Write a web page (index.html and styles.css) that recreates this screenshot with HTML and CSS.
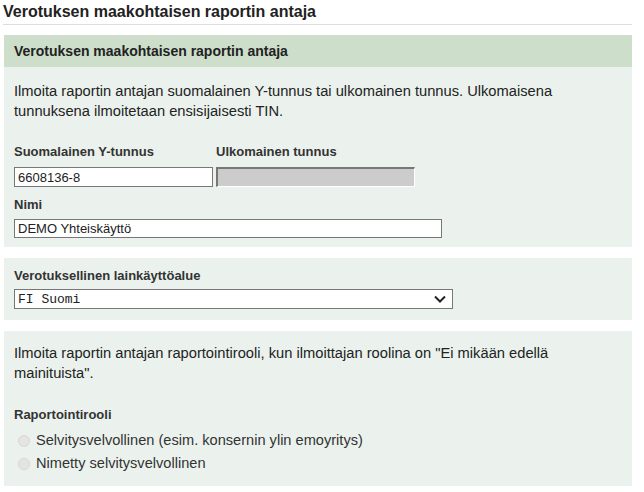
FILE: index.html
```html
<!DOCTYPE html>
<html lang="fi">
<head>
    <meta charset="UTF-8">
    <meta name="viewport" content="width=device-width, initial-scale=1.0">
    <title>Verotuksen maakohtaisen raportin antaja</title>
    <link rel="stylesheet" href="styles.css">
</head>
<body>
    <div class="page">
        <h1 class="page-title">Verotuksen maakohtaisen raportin antaja</h1>

        <section class="panel">
            <h2 class="panel-head">Verotuksen maakohtaisen raportin antaja</h2>
            <div class="panel-body first">
                <p class="info">Ilmoita raportin antajan suomalainen Y-tunnus tai ulkomainen tunnus. Ulkomaisena tunnuksena ilmoitetaan ensisijaisesti TIN.</p>
                <div class="field-row">
                    <div class="field">
                        <label for="ytunnus">Suomalainen Y-tunnus</label>
                        <input type="text" id="ytunnus" class="text-input short" value="6608136-8">
                    </div>
                    <div class="field">
                        <label for="ulkotunnus">Ulkomainen tunnus</label>
                        <input type="text" id="ulkotunnus" class="text-input short disabled" disabled>
                    </div>
                </div>
                <div class="field">
                    <label for="nimi">Nimi</label>
                    <input type="text" id="nimi" class="text-input wide" value="DEMO Yhteiskäyttö">
                </div>
            </div>
        </section>

        <section class="panel">
            <div class="panel-body second">
                <div class="field">
                    <label for="alue">Verotuksellinen lainkäyttöalue</label>
                    <div class="select-wrap">
                        <select id="alue" class="select">
                            <option>FI Suomi</option>
                        </select>
                        <svg class="chevron" width="12" height="8" viewBox="0 0 12 8">
                            <path d="M1 1.5 L6 6.5 L11 1.5" fill="none" stroke="#222" stroke-width="2"/>
                        </svg>
                    </div>
                </div>
            </div>
        </section>

        <section class="panel">
            <div class="panel-body third">
                <p class="info">Ilmoita raportin antajan raportointirooli, kun ilmoittajan roolina on "Ei mikään edellä mainituista".</p>
                <div class="role-label">Raportointirooli</div>
                <label class="radio"><input type="radio" name="rooli" disabled> Selvitysvelvollinen (esim. konsernin ylin emoyritys)</label>
                <label class="radio"><input type="radio" name="rooli" disabled> Nimetty selvitysvelvollinen</label>
            </div>
        </section>
    </div>
</body>
</html>
```

FILE: styles.css
```css
body {
    font-family: "Liberation Sans", Arial, sans-serif;
    margin: 0;
    padding: 0;
    background-color: #fff;
    color: #222;
}

.page {
    width: 628px;
    padding: 0 4px;
}

.page-title {
    font-size: 16px;
    font-weight: bold;
    color: #222;
    margin: 0 0 10px -1px;
    padding: 2px 0 0;
    line-height: 19px;
    height: 22px;
    border-bottom: 1px solid #ddd;
}

.panel {
    background-color: #ebf2ed;
    margin-bottom: 11px;
}

.panel-head {
    margin: 0;
    background-color: #cddfcb;
    font-size: 14px;
    font-weight: bold;
    color: #222;
    height: 32px;
    line-height: 32px;
    padding: 0 10px;
}

.panel-body {
    padding: 0 10px;
}

.panel-body.first {
    padding-top: 14px;
    padding-bottom: 9px;
}

.panel-body.second {
    padding-top: 10px;
    padding-bottom: 11px;
}

.panel-body.third {
    padding-top: 12px;
    padding-bottom: 11px;
}

.info {
    margin: 0;
    font-size: 14.7px;
    line-height: 20px;
    color: #222;
}

.field-row {
    display: flex;
    gap: 3px;
    margin-top: 23px;
}

.field label,
.role-label {
    display: block;
    font-size: 13px;
    font-weight: bold;
    color: #333;
    line-height: 16px;
    margin-bottom: 7px;
}

.field-row + .field {
    margin-top: 10px;
}

.field-row + .field label {
    margin-bottom: 6px;
}

.panel-body.second label {
    margin-bottom: 5px;
}

.text-input {
    box-sizing: border-box;
    height: 20px;
    border: 1px solid #777;
    padding: 0 3px;
    font-family: "Liberation Sans", Arial, sans-serif;
    font-size: 13px;
    color: #222;
    background-color: #fff;
    margin: 0;
    display: block;
}

.text-input.short {
    width: 199px;
}

.text-input.wide {
    width: 428px;
    height: 19px;
}

.text-input.disabled {
    background-color: #ccc;
    border-color: #fff;
    border-top: 2px solid #777;
    border-left: 2px solid #777;
}

.select-wrap {
    position: relative;
    width: 439px;
}

.select {
    appearance: none;
    -webkit-appearance: none;
    box-sizing: border-box;
    width: 439px;
    height: 20px;
    border: 1px solid #777;
    border-radius: 0;
    background-color: #fff;
    font-family: "Liberation Mono", "Courier New", monospace;
    font-size: 13px;
    color: #222;
    padding: 0 3px;
    margin: 0;
    display: block;
}

.chevron {
    position: absolute;
    right: 7px;
    top: 6px;
}

.role-label {
    margin-top: 24px;
    margin-bottom: 6px;
}

.radio {
    display: flex;
    align-items: center;
    gap: 6px;
    font-size: 14.6px;
    line-height: 23px;
    color: #333;
}

.radio input {
    appearance: none;
    -webkit-appearance: none;
    width: 12px;
    height: 12px;
    margin: 0 0 0 4px;
    border: 1px solid #d6d6d6;
    border-radius: 50%;
    background-color: #e4e4e4;
}
```
